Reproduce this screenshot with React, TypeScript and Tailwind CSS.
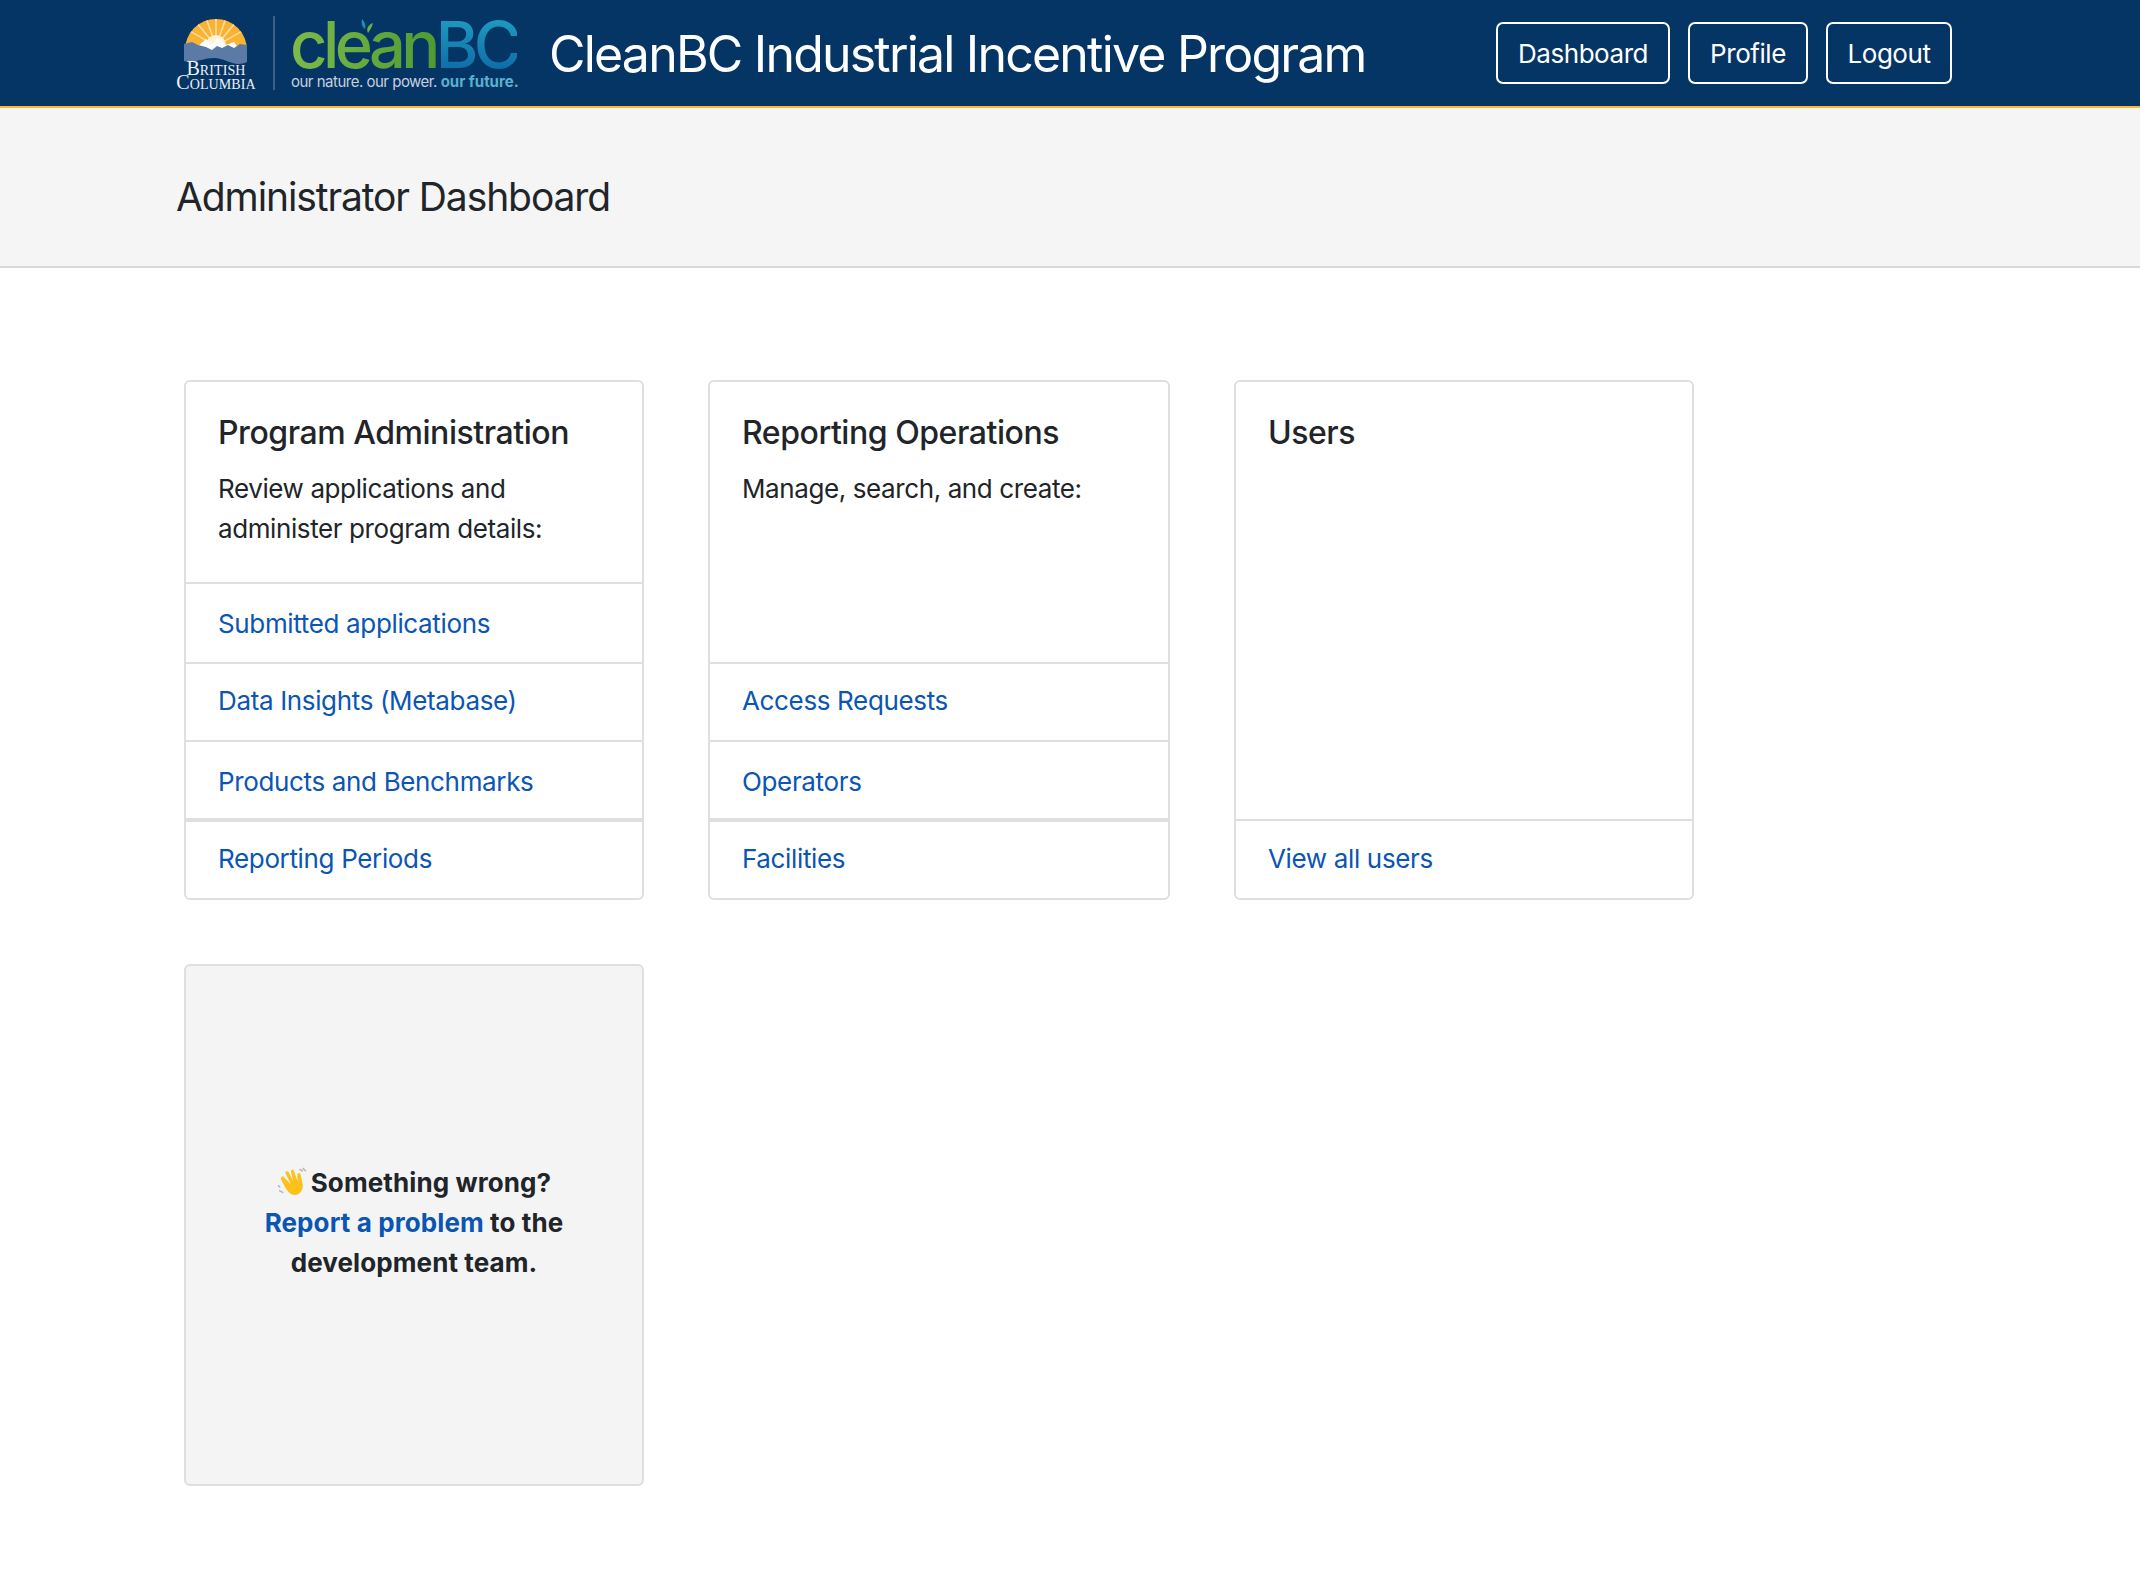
import React from "react";

const inter = { fontFamily: "Inter, sans-serif" };

function BcLogo() {
    return (
        <div className="flex flex-col items-center w-[82px] shrink-0">
            <svg width="64" height="48" viewBox="0 0 64 48">
                <defs>
                    <clipPath id="sun">
                        <path d="M1 32 A31 31 0 0 1 63 32 L63 34 L1 34 Z" />
                    </clipPath>
                </defs>
                <path d="M1 32 A31 31 0 0 1 63 32 L63 34 L1 34 Z" fill="#f9b233" />
                <g clipPath="url(#sun)" stroke="#fde3a7" strokeWidth="1.4">
                    <line x1="32" y1="28" x2="4" y2="12" />
                    <line x1="32" y1="28" x2="12" y2="4" />
                    <line x1="32" y1="28" x2="22" y2="0" />
                    <line x1="32" y1="28" x2="32" y2="0" />
                    <line x1="32" y1="28" x2="42" y2="0" />
                    <line x1="32" y1="28" x2="52" y2="4" />
                    <line x1="32" y1="28" x2="60" y2="12" />
                </g>
                <circle cx="32" cy="27" r="10" fill="#fff3d6" />
                <path d="M12 30 L22 21 L28 26 L34 20 L42 27 L50 24 L56 32 L30 38 Z" fill="#ffffff" />
                <path d="M0 26 L8 24 L14 27 L22 29 L28 32 L33 28 L38 30 L44 27 L50 30 L56 26 L63 27 L63 44 C50 50 42 40 30 40 C18 40 10 46 0 43 Z" fill="#5b7ba6" />
            </svg>
            <div
                className="text-[#eef1f5] text-center text-[20px] tracking-[0.1px] leading-[14px] -mt-[5px] whitespace-nowrap"
                style={{ fontFamily: '"Liberation Serif", serif', fontVariant: "small-caps" }}
            >
                <div>British</div>
                <div>Columbia</div>
            </div>
        </div>
    );
}

function CleanBcLogo() {
    return (
        <div className="relative w-[232px] h-[74px] shrink-0">
            <div className="flex items-baseline h-[56px] pt-[1px] leading-[56px] text-[65px] font-medium tracking-[-4.6px]" style={inter}>
                <span className="bg-gradient-to-r from-[#7dbb4a] to-[#4f9a33] bg-clip-text text-transparent">clean</span>
                <span className="bg-gradient-to-b from-[#1f9cc0] to-[#0f6aa6] bg-clip-text text-transparent">BC</span>
            </div>
            {/* 葉っぱ */}
            <svg className="absolute left-[68px] top-[3px]" width="16" height="16" viewBox="0 0 16 16">
                <path d="M4 0 C7 3 8 6 7 10 C4 8 3 4 4 0 Z" fill="#1b8fb8" />
                <path d="M15 4 C14 8 12 11 10 14 C8 10 10 6 15 4 Z" fill="#6fb144" />
            </svg>
            <div className="absolute left-[1px] top-[57px] text-[15px] leading-[18px] whitespace-nowrap tracking-[-0.5px] text-[#c5d0de]" style={inter}>
                our nature. our power. <span className="font-bold text-[#5ab0cf] tracking-normal">our future.</span>
            </div>
        </div>
    );
}

function NavButton({ label, width }: { label: string; width: string }) {
    return (
        <a className={`flex items-center justify-center h-[62px] border-2 border-white rounded-[7px] text-white text-[26px] tracking-[-0.45px] ${width}`}>
            {label}
        </a>
    );
}

function Card({
    title,
    text,
    links,
    width,
}: {
    title: string;
    text?: React.ReactNode;
    links: { label: string; h: string }[];
    width: string;
}) {
    return (
        <div className={`flex flex-col h-[520px] border-2 border-[#dfdfdf] rounded-[6px] bg-white ${width}`}>
            <div className="flex-1 px-[32px] pt-[31px]">
                <h2 className="text-[32px] leading-[40px] font-medium tracking-[-0.45px] text-[#212529]">{title}</h2>
                {text && <p className="mt-[16px] text-[26px] leading-[40px] tracking-[-0.4px] text-[#212529]">{text}</p>}
            </div>
            {links.map((l) => (
                <a
                    key={l.label}
                    className={`flex items-center px-[32px] text-[26px] tracking-[-0.35px] text-[#0b55b3] border-[#dfdfdf] ${l.h}`}
                >
                    {l.label}
                </a>
            ))}
        </div>
    );
}

export default function App() {
    return (
        <div className="min-h-[1578px] bg-white text-[#212529]" style={inter}>
            <header className="flex items-center h-[108px] pl-[175px] pr-[188px] bg-[#053565] border-b-2 border-[#fcb72f]">
                <BcLogo />
                <div className="w-[2px] h-[74px] bg-[#3e5f88] ml-[16px] mr-[15px]" />
                <CleanBcLogo />
                <h1 className="ml-[27px] mt-[3px] text-[50px] tracking-[-1.8px] text-white whitespace-nowrap">CleanBC Industrial Incentive Program</h1>
                <nav className="ml-auto flex gap-[18px]">
                    <NavButton label="Dashboard" width="w-[174px]" />
                    <NavButton label="Profile" width="w-[120px]" />
                    <NavButton label="Logout" width="w-[126px]" />
                </nav>
            </header>

            <div className="flex items-center h-[160px] pl-[176px] pt-[20px] bg-[#f5f5f5] border-b-2 border-[#d8d8d8]">
                <h2 className="text-[39px] tracking-[-1.1px] text-[#212529]">Administrator Dashboard</h2>
            </div>

            <main className="pl-[184px] pt-[112px]">
                <div className="flex gap-[64px]">
                    <Card
                        width="w-[460px]"
                        title="Program Administration"
                        text={<>Review applications and<br />administer program details:</>}
                        links={[
                            { label: "Submitted applications", h: "h-[80px] border-t-2" },
                            { label: "Data Insights (Metabase)", h: "h-[78px] border-t-2 pb-[3px]" },
                            { label: "Products and Benchmarks", h: "h-[78px] border-t-2 pt-[2px]" },
                            { label: "Reporting Periods", h: "h-[80px] border-t-4 pb-[3px]" },
                        ]}
                    />
                    <Card
                        width="w-[462px]"
                        title="Reporting Operations"
                        text="Manage, search, and create:"
                        links={[
                            { label: "Access Requests", h: "h-[78px] border-t-2 pb-[3px]" },
                            { label: "Operators", h: "h-[78px] border-t-2 pt-[2px]" },
                            { label: "Facilities", h: "h-[80px] border-t-4 pb-[3px]" },
                        ]}
                    />
                    <Card width="w-[460px]" title="Users" links={[{ label: "View all users", h: "h-[79px] border-t-2 pb-[3px]" }]} />
                </div>

                <div className="mt-[64px] flex items-center justify-center w-[460px] h-[522px] pb-[5px] border-2 border-[#dfdfdf] rounded-[6px] bg-[#f4f4f4]">
                    <p className="text-center text-[26px] leading-[40px] font-bold tracking-[0.1px] text-[#212529]">
                        <svg className="inline-block mr-[4px] align-[-5px]" width="30" height="30" viewBox="0 0 28 28">
                            <path d="M3 19 L1 17 M6 24 L2 22 M21 2 L24 4 M24 1 L27 4" stroke="#b9b9b9" strokeWidth="1.5" fill="none" />
                            <path d="M6 9 L13 16 L8 6 C7 4 10 3 11 5 L15 13 L13 4 C13 2 16 2 16 4 L19 13 L19 7 C19 5 22 5 22 7 L24 16 C25 22 20 27 15 26 C11 25 9 22 4 12 C3 10 5 8 6 9 Z" fill="#fcc21b" />
                        </svg>
                        Something wrong?
                        <br />
                        <a className="text-[#0b55b3]">Report a problem</a> to the
                        <br />
                        development team.
                    </p>
                </div>
            </main>
        </div>
    );
}
